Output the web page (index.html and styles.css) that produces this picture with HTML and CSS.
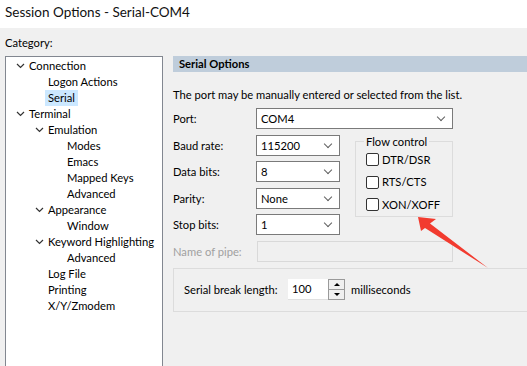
FILE: index.html
```html
<!DOCTYPE html>
<html lang="en">
<head>
    <meta charset="UTF-8">
    <title>Session Options - Serial-COM4</title>
    <link rel="stylesheet" href="styles.css">
</head>
<body>
    <div class="titlebar">Session Options - Serial-COM4</div>
    <div class="dialog">
        <div class="category">
            <div class="cat-label">Category:</div>
            <ul class="tree">
                <li class="node l0"><span class="tw"><svg width="9" height="6" viewBox="0 0 9 6"><path d="M1 1l3.5 3.5L8 1" fill="none" stroke="#333" stroke-width="1.2"/></svg></span>Connection</li>
                <li class="node l1"><span class="tw"></span>Logon Actions</li>
                <li class="node l1"><span class="tw"></span><span class="sel">Serial</span></li>
                <li class="node l0"><span class="tw"><svg width="9" height="6" viewBox="0 0 9 6"><path d="M1 1l3.5 3.5L8 1" fill="none" stroke="#333" stroke-width="1.2"/></svg></span>Terminal</li>
                <li class="node l1"><span class="tw"><svg width="9" height="6" viewBox="0 0 9 6"><path d="M1 1l3.5 3.5L8 1" fill="none" stroke="#333" stroke-width="1.2"/></svg></span>Emulation</li>
                <li class="node l2"><span class="tw"></span>Modes</li>
                <li class="node l2"><span class="tw"></span>Emacs</li>
                <li class="node l2"><span class="tw"></span>Mapped Keys</li>
                <li class="node l2"><span class="tw"></span>Advanced</li>
                <li class="node l1"><span class="tw"><svg width="9" height="6" viewBox="0 0 9 6"><path d="M1 1l3.5 3.5L8 1" fill="none" stroke="#333" stroke-width="1.2"/></svg></span>Appearance</li>
                <li class="node l2"><span class="tw"></span>Window</li>
                <li class="node l1"><span class="tw"><svg width="9" height="6" viewBox="0 0 9 6"><path d="M1 1l3.5 3.5L8 1" fill="none" stroke="#333" stroke-width="1.2"/></svg></span>Keyword Highlighting</li>
                <li class="node l2"><span class="tw"></span>Advanced</li>
                <li class="node l1"><span class="tw"></span>Log File</li>
                <li class="node l1"><span class="tw"></span>Printing</li>
                <li class="node l1"><span class="tw"></span>X/Y/Zmodem</li>
            </ul>
        </div>

        <div class="panel">
            <div class="panel-head">Serial Options</div>
            <p class="hint">The port may be manually entered or selected from the list.</p>

            <div class="row">
                <label class="lbl">Port:</label>
                <div class="combo wide">COM4<span class="caret"></span></div>
            </div>

            <div class="split">
                <div class="fields">
                    <div class="row">
                        <label class="lbl">Baud rate:</label>
                        <div class="combo">115200<span class="caret"></span></div>
                    </div>
                    <div class="row">
                        <label class="lbl">Data bits:</label>
                        <div class="combo">8<span class="caret"></span></div>
                    </div>
                    <div class="row">
                        <label class="lbl">Parity:</label>
                        <div class="combo">None<span class="caret"></span></div>
                    </div>
                    <div class="row">
                        <label class="lbl">Stop bits:</label>
                        <div class="combo">1<span class="caret"></span></div>
                    </div>
                </div>
                <fieldset class="flow">
                    <legend>Flow control</legend>
                    <div class="check"><span class="box"></span>DTR/DSR</div>
                    <div class="check"><span class="box"></span>RTS/CTS</div>
                    <div class="check"><span class="box"></span>XON/XOFF</div>
                </fieldset>
            </div>

            <div class="row">
                <label class="lbl disabled">Name of pipe:</label>
                <div class="input-off"></div>
            </div>

            <div class="break-box">
                <span class="break-lbl">Serial break length:</span>
                <div class="spin">
                    <div class="spin-val">100</div>
                    <div class="spin-btns">
                        <div class="spin-btn"><span class="up"></span></div>
                        <div class="spin-btn"><span class="down"></span></div>
                    </div>
                </div>
                <span>milliseconds</span>
            </div>
        </div>
    </div>

    <svg class="arrow" width="527" height="366" viewBox="0 0 527 366">
        <polygon points="418,217 436,219 430,223.5 488,268 425,228 421,231" fill="#f23b2f"/>
    </svg>
</body>
</html>
```

FILE: styles.css
```css
body {
    margin: 0;
    width: 527px;
    height: 366px;
    overflow: hidden;
    background: #f0f0f0;
    font-family: Lato, "Noto Sans", sans-serif;
    font-size: 11.2px;
    color: #000;
    position: relative;
}
.titlebar {
    background: #fff;
    height: 28px;
    line-height: 24px;
    padding-left: 5px;
    font-size: 13.5px;
    color: #111;
}
.dialog {
    display: flex;
    padding-left: 5px;
}
.category {
    width: 158px;
    flex-shrink: 0;
}
.cat-label {
    height: 28px;
    line-height: 30px;
}
.tree {
    list-style: none;
    margin: 0;
    padding: 1px 0 0;
    background: #fff;
    border: 1px solid #828790;
    height: 320px;
}
.node {
    display: flex;
    align-items: center;
    height: 16px;
    line-height: 16px;
    white-space: nowrap;
}
.tw {
    width: 13px;
    flex-shrink: 0;
    display: flex;
    align-items: center;
}
.l0 { padding-left: 10px; }
.l1 { padding-left: 29px; }
.l2 { padding-left: 48px; }
.sel {
    background: #cce8ff;
    padding: 0 3px;
    margin-left: -3px;
}
.panel {
    flex: 1;
    margin-left: 10px;
    padding-top: 28px;
}
.panel-head {
    background: #bfcddb;
    height: 16px;
    line-height: 16px;
    font-weight: bold;
    padding-left: 6px;
}
.hint {
    margin: 15px 0 5px;
    line-height: 16px;
}
.row {
    display: flex;
    align-items: center;
    height: 21px;
    margin-bottom: 5.5px;
}
.lbl {
    width: 83px;
    flex-shrink: 0;
}
.lbl.disabled {
    color: #a0a0a0;
}
.combo {
    position: relative;
    box-sizing: border-box;
    width: 84px;
    height: 21px;
    line-height: 19px;
    border: 1px solid #7a7a7a;
    background: #fff;
    padding-left: 4px;
}
.combo.wide {
    width: 197px;
}
.caret {
    position: absolute;
    right: 8px;
    top: 5px;
    width: 5px;
    height: 5px;
    border-right: 1px solid #606060;
    border-bottom: 1px solid #606060;
    transform: rotate(45deg);
}
.split {
    display: flex;
    align-items: flex-start;
}
.flow {
    margin: 0 0 0 15px;
    padding: 0 0 6px 10px;
    width: 86px;
    border: 1px solid #dcdcdc;
    height: 74px;
}
.flow legend {
    padding: 0 2px;
    margin-left: -2px;
    line-height: 14px;
}
.check {
    display: flex;
    align-items: center;
    height: 22.5px;
    line-height: 16px;
}
.box {
    width: 11px;
    height: 11px;
    border: 1px solid #333;
    border-radius: 2px;
    margin-right: 3px;
    background: #fff;
}
.input-off {
    box-sizing: border-box;
    width: 196px;
    height: 21px;
    border: 1px solid #d9d9d9;
    margin-left: 1px;
}
.break-box {
    display: flex;
    align-items: center;
    height: 42px;
    border: 1px solid #dcdcdc;
    border-right: none;
    margin-top: 6px;
    padding-left: 10px;
}
.break-lbl {
    width: 104px;
    white-space: nowrap;
}
.spin {
    display: flex;
    height: 21px;
    margin-right: 6px;
}
.spin-val {
    width: 40px;
    background: #fff;
    line-height: 20px;
    padding-left: 4px;
    box-sizing: border-box;
    border-bottom: 1px solid #e0e0e0;
}
.spin-btns {
    display: flex;
    flex-direction: column;
    width: 17px;
}
.spin-btn {
    flex: 1;
    box-sizing: border-box;
    border: 1px solid #9a9a9a;
    background: #f0f0f0;
    display: flex;
    align-items: center;
    justify-content: center;
}
.spin-btn + .spin-btn {
    border-top: none;
}
.up {
    border-left: 3px solid transparent;
    border-right: 3px solid transparent;
    border-bottom: 3px solid #000;
}
.down {
    border-left: 3px solid transparent;
    border-right: 3px solid transparent;
    border-top: 3px solid #000;
}
.arrow {
    position: absolute;
    left: 0;
    top: 0;
    pointer-events: none;
}
```
